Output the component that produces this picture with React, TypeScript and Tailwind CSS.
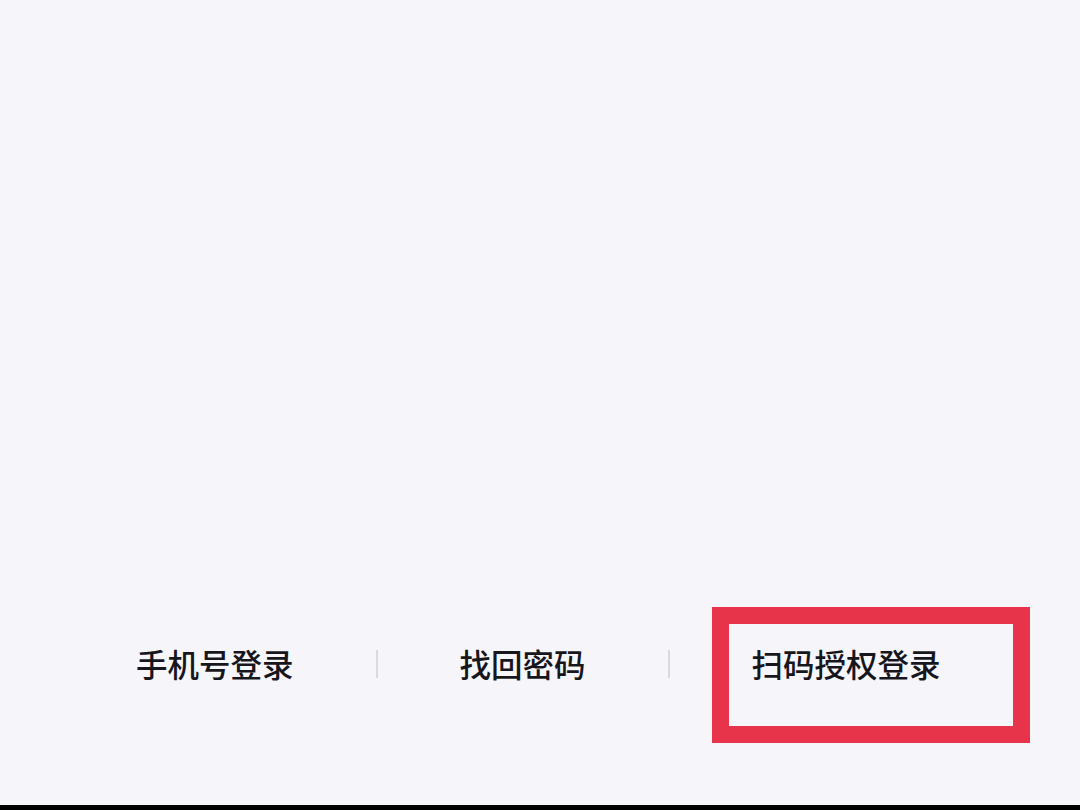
import React from "react";

export default function App() {
  return (
    <div
      className="relative flex h-[810px] w-[1080px] flex-col bg-[#f6f6fa]"
      style={{ fontFamily: '"Noto Sans CJK SC", "Noto Sans", sans-serif' }}
    >
      <div className="flex-1" />
      <div className="flex h-[40px] items-center gap-[82px] pl-[136px] text-[31.5px] font-medium leading-none text-[#16161c]">
        <span>手机号登录</span>
        <span className="h-[28px] w-[2px] bg-[#d9d9de]" />
        <span>找回密码</span>
        <span className="h-[28px] w-[2px] bg-[#d9d9de]" />
        <span>扫码授权登录</span>
      </div>
      <div className="h-[121px]" />
      <div className="h-[5px] bg-black" />
      <div className="absolute left-[712px] top-[607px] h-[136px] w-[318px] border-[17px] border-[#e8344a]" />
    </div>
  );
}
